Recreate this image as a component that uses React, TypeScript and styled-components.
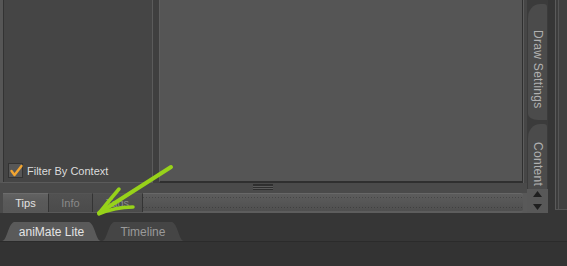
import React from "react";
import styled, { createGlobalStyle } from "styled-components";

const Global = createGlobalStyle`
  html, body { margin: 0; padding: 0; background: #333; }
  body { font-family: "Liberation Sans", Arial, sans-serif; }
`;

const Root = styled.div`
  position: relative;
  width: 567px;
  height: 266px;
  overflow: hidden;
  display: flex;
  flex-direction: column;
  background: #343434;
  font-family: "Liberation Sans", Arial, sans-serif;
`;

const Top = styled.div`
  display: flex;
  height: 213px;
  flex: none;
`;

const Workspace = styled.div`
  width: 527px;
  flex: none;
  display: flex;
  flex-direction: column;
  background: #4a4a4a;
`;

const Panes = styled.div`
  display: flex;
  height: 183px;
  flex: none;
`;

const LeftPanel = styled.div`
  width: 144px;
  border-left: 3px solid #565656;
  border-right: 1px solid #5b5b5b;
  border-bottom: 1px solid #5b5b5b;
  box-shadow: inset 1px 0 #333;
  background: #454545;
  display: flex;
  flex-direction: column;
  justify-content: flex-end;
  padding: 0 0 4px 5px;
`;

const CheckRow = styled.label`
  display: flex;
  align-items: center;
  gap: 4px;
  height: 15px;
  color: #dcdcdc;
  font-size: 11px;
`;

const CheckBox = styled.span`
  position: relative;
  width: 13px;
  height: 13px;
  border: 1px solid #333;
  background: #575757;
  display: flex;
  align-items: center;
  justify-content: center;
`;

const Gutter = styled.div`
  width: 6px;
  background: #3f3f3f;
`;

const MainView = styled.div`
  flex: 1;
  background: #555;
  border-left: 1px solid #5e5e5e;
  border-right: 1px solid #2f2f2f;
  border-bottom: 2px solid #2f2f2f;
`;

const RightEdge = styled.div`
  width: 3px;
  border-left: 1px solid #5d5d5d;
  background: #464646;
`;

const Splitter = styled.div`
  height: 10px;
  flex: none;
  background: #4a4a4a;
  display: flex;
  align-items: flex-start;
  padding-top: 1px;
  box-sizing: border-box;
`;

const Handle = styled.div`
  margin-left: 253px;
  width: 20px;
  height: 6px;
  background: linear-gradient(
    #2e2e2e 0 1px,
    #303030 1px 2px,
    #5a5a5a 2px 3px,
    #2e2e2e 3px 4px,
    #5a5a5a 4px 5px,
    #2e2e2e 5px
  );
`;

const TabBar = styled.div`
  height: 20px;
  flex: none;
  display: flex;
  padding: 0 4px 0 3px;
  background: #595959;
  box-shadow: inset 3px 0 #4a4a4a;
`;

const PanelTab = styled.div<{ $active?: boolean }>`
  height: 19px;
  border-right: 1px solid #343434;
  border-top: 1px solid ${(p) => (p.$active ? "#6c6c6c" : "#555")};
  background: ${(p) =>
    p.$active
      ? "linear-gradient(#626262, #5a5a5a 40%, #575757)"
      : "linear-gradient(#515151, #4b4b4b)"};
  color: ${(p) => (p.$active ? "#e2e2e2" : "#8a8a8a")};
  font-size: 11px;
  display: flex;
  align-items: center;
  justify-content: center;
  box-sizing: border-box;
`;

const Filler = styled.div`
  flex: 1;
  height: 20px;
  box-sizing: border-box;
  border-top: 1px solid #686868;
  border-bottom: 2px solid #5d5d5d;
  border-radius: 0 3px 3px 0;
  background: repeating-linear-gradient(90deg, rgba(0, 0, 0, 0.22) 0 1px, transparent 1px 3px) 0 3px / 100% 1px no-repeat,
    repeating-linear-gradient(90deg, rgba(0, 0, 0, 0.22) 0 1px, transparent 1px 3px) 0 13px / 100% 1px no-repeat,
    linear-gradient(#5c5c5c, #565656 50%, #4f4f4f);
`;

const SideDock = styled.div`
  width: 21px;
  flex: none;
  display: flex;
  flex-direction: column;
  background: #3b3b3b;
`;

const VTabs = styled.div`
  flex: 1;
  display: flex;
  flex-direction: column;
  gap: 4px;
  overflow: hidden;
`;

const VTabStub = styled.div`
  width: 19px;
  height: 4px;
  background: #4a4a4a;
  border-bottom-right-radius: 12px 4px;
  margin-left: 1px;
`;

const VTab = styled.div<{ $h: number; $pad: number }>`
  width: 19px;
  margin-left: 1px;
  height: ${(p) => p.$h}px;
  flex: none;
  box-sizing: border-box;
  padding-top: ${(p) => p.$pad}px;
  background: #4b4b4b;
  border-radius: 12px 3px 0 10px / 14px 3px 0 6px;
  writing-mode: vertical-rl;
  color: #b0b0b0;
  font-size: 12px;
  letter-spacing: 0.3px;
  display: flex;
  align-items: center;
  white-space: nowrap;
`;

const ScrollBox = styled.div`
  height: 24px;
  flex: none;
  background: #585858;
  display: flex;
  flex-direction: column;
  align-items: center;
  justify-content: space-between;
  padding: 2px 0 3px;
  box-sizing: border-box;
`;

const FarStrip = styled.div`
  flex: 1;
  background: #363636;
  padding-left: 7px;
  display: flex;
`;

const FarBox = styled.div`
  flex: 1;
  height: 209px;
  border-left: 1px solid #5a5a5a;
  border-bottom: 1px solid #555;
  box-shadow: inset 2px 0 #3d3d3d, inset 3px 0 #555;
  background: #404040;
`;

const Bottom = styled.div`
  flex: 1;
  display: flex;
  flex-direction: column;
  background: #333;
`;

const DocTabs = styled.div`
  height: 29px;
  flex: none;
  box-sizing: border-box;
  background: #363636;
  border-bottom: 1px solid #2b2b2b;
  display: flex;
  align-items: flex-end;
  padding-left: 2px;
  gap: 1px;
`;

const DocTab = styled.div<{ $active?: boolean; $w: number }>`
  width: ${(p) => p.$w}px;
  height: 19px;
  background: ${(p) => (p.$active ? "#5a5a5a" : "#454545")};
  color: ${(p) => (p.$active ? "#e4e4e4" : "#9a9a9a")};
  font-size: 12px;
  display: flex;
  align-items: center;
  justify-content: center;
  clip-path: ${(p) =>
    `path('M0 19 C5 19 6 2 12 0 L${p.$w - 12} 0 C${p.$w - 6} 2 ${p.$w - 5} 19 ${p.$w} 19 Z')`};
`;

const Overlay = styled.svg`
  position: absolute;
  left: 0;
  top: 0;
  pointer-events: none;
`;

export default function App() {
  return (
    <Root>
      <Global />
      <Top>
        <Workspace>
          <Panes>
            <LeftPanel>
              <CheckRow>
                <CheckBox>
                  <svg width="15" height="15" viewBox="0 0 15 15" style={{ position: "absolute", left: 0, top: -1 }}>
                    <polyline points="2.5,8 5.5,12 12.5,3" fill="none" stroke="#f2a531" strokeWidth="2.4" strokeLinecap="round" strokeLinejoin="round" />
                  </svg>
                </CheckBox>
                Filter By Context
              </CheckRow>
            </LeftPanel>
            <Gutter />
            <MainView />
            <RightEdge />
          </Panes>
          <Splitter>
            <Handle />
          </Splitter>
          <TabBar>
            <PanelTab $active style={{ width: 46 }}>Tips</PanelTab>
            <PanelTab style={{ width: 44 }}>Info</PanelTab>
            <PanelTab style={{ width: 50 }}>Tags</PanelTab>
            <Filler />
          </TabBar>
        </Workspace>
        <SideDock>
          <VTabs>
            <VTabStub />
            <VTab $h={116} $pad={26}>Draw Settings</VTab>
            <VTab $h={70} $pad={18}>Content</VTab>
          </VTabs>
          <ScrollBox>
            <svg width="9" height="6" viewBox="0 0 9 6"><polygon points="4.5,0 9,6 0,6" fill="#1f1f1f" /></svg>
            <svg width="9" height="6" viewBox="0 0 9 6"><polygon points="0,0 9,0 4.5,6" fill="#1f1f1f" /></svg>
          </ScrollBox>
        </SideDock>
        <FarStrip>
          <FarBox />
        </FarStrip>
      </Top>
      <Bottom>
        <DocTabs>
          <DocTab $active $w={99}>aniMate Lite</DocTab>
          <DocTab $w={82}>Timeline</DocTab>
        </DocTabs>
      </Bottom>
      <Overlay width="567" height="266" viewBox="0 0 567 266">
        <g fill="none" stroke="#97d21a" strokeLinecap="round" strokeLinejoin="round">
          <line x1="171" y1="167" x2="99" y2="213" strokeWidth="4" />
          <path d="M119 189 Q108 202 99 213" strokeWidth="3.5" />
          <path d="M133 207 Q115 207 99 214" strokeWidth="3.5" />
        </g>
      </Overlay>
    </Root>
  );
}
